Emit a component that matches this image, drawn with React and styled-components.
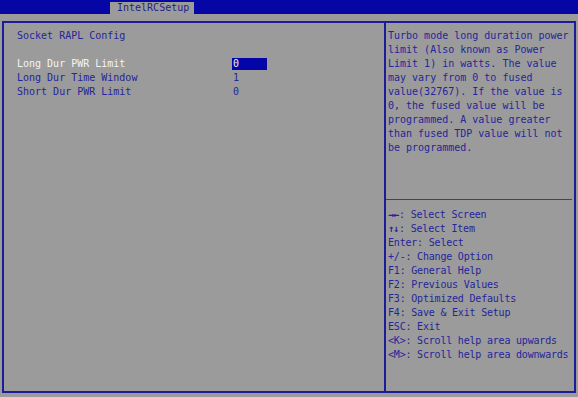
import styled, { createGlobalStyle } from "styled-components";

const GlobalStyle = createGlobalStyle`
  html, body {
    margin: 0;
    padding: 0;
    background: #9b9b9b;
  }
  body {
    font-family: "DejaVu Sans Mono", "Liberation Mono", monospace;
    font-size: 10px;
    line-height: 14px;
    color: #25259a;
  }
`;

const Screen = styled.div`
  width: 578px;
  height: 397px;
  display: flex;
  flex-direction: column;
  background: #9b9b9b;
  overflow: hidden;
`;

const TopBar = styled.div`
  height: 14px;
  background: #0606a4;
  display: flex;
  align-items: flex-end;
  padding-left: 110px;
`;

const Tab = styled.div`
  height: 12px;
  line-height: 12px;
  padding: 0 5px 0 7px;
  background: #9b9b9b;
  color: #1e1e8a;
`;

const Frame = styled.div`
  margin: 7px 2px 0;
  height: 368px;
  border: 2px solid #1c1c98;
  display: grid;
  grid-template-columns: 380px 2px 1fr;
`;

const LeftPane = styled.div`
  padding: 6px 0 0 13px;
`;

const VDivider = styled.div`
  background: #1c1c98;
`;

const RightPane = styled.div`
  display: grid;
  grid-template-rows: 176px 1px 1fr;
`;

const HelpText = styled.div`
  padding: 6px 4px 0 2px;
  white-space: pre;
`;

const HDivider = styled.div`
  background: #3a3aa0;
  margin-right: 2px;
`;

const Keys = styled.div`
  padding: 8px 0 0 2px;
  white-space: pre;
  letter-spacing: -0.2px;
`;

const Arrows = styled.span`
  font-weight: bold;
  letter-spacing: -1px;
  margin-right: 1px;
`;

const Title = styled.div`
  height: 28px;
`;

const Row = styled.div`
  display: grid;
  grid-template-columns: 215px 1fr;
`;

const Label = styled.span`
  color: ${(p) => (p.$active ? "#f4f4f4" : "#25259a")};
`;

const Value = styled.span`
  display: inline-block;
  width: 34px;
  height: 12px;
  line-height: 12px;
  padding-left: 1px;
  margin-top: 1px;
  background: ${(p) => (p.$active ? "#0404a8" : "transparent")};
  color: ${(p) => (p.$active ? "#f4f4f4" : "#25259a")};
`;

const items = [
  { label: "Long Dur PWR Limit", value: "0", active: true },
  { label: "Long Dur Time Window", value: "1" },
  { label: "Short Dur PWR Limit", value: "0" },
];

const help = [
  "Turbo mode long duration power",
  "limit (Also known as Power",
  "Limit 1) in watts. The value",
  "may vary from 0 to fused",
  "value(32767). If the value is",
  "0, the fused value will be",
  "programmed. A value greater",
  "than fused TDP value will not",
  "be programmed.",
];

const keys = [
  { arrows: "→←", text: ": Select Screen" },
  { arrows: "↑↓", text: ": Select Item" },
  { text: "Enter: Select" },
  { text: "+/-: Change Option" },
  { text: "F1: General Help" },
  { text: "F2: Previous Values" },
  { text: "F3: Optimized Defaults" },
  { text: "F4: Save & Exit Setup" },
  { text: "ESC: Exit" },
  { text: "<K>: Scroll help area upwards" },
  { text: "<M>: Scroll help area downwards" },
];

export default function App() {
  return (
    <Screen>
      <GlobalStyle />
      <TopBar>
        <Tab>IntelRCSetup</Tab>
      </TopBar>
      <Frame>
        <LeftPane>
          <Title>Socket RAPL Config</Title>
          {items.map((it) => (
            <Row key={it.label}>
              <Label $active={it.active}>{it.label}</Label>
              <div>
                <Value $active={it.active}>{it.value}</Value>
              </div>
            </Row>
          ))}
        </LeftPane>
        <VDivider />
        <RightPane>
          <HelpText>
            {help.map((l) => (
              <div key={l}>{l}</div>
            ))}
          </HelpText>
          <HDivider />
          <Keys>
            {keys.map((k) => (
              <div key={k.text}>
                {k.arrows && <Arrows>{k.arrows}</Arrows>}
                {k.text}
              </div>
            ))}
          </Keys>
        </RightPane>
      </Frame>
    </Screen>
  );
}
